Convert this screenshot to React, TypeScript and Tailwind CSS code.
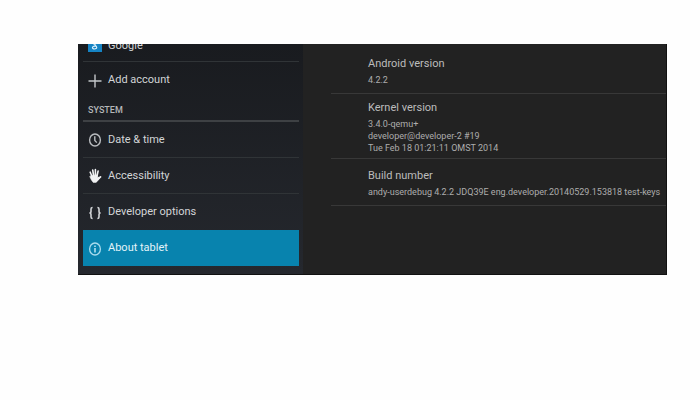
import React from 'react';

interface MenuItemProps {
  label: string;
  icon: React.ReactNode;
  active?: boolean;
  last?: boolean;
}

interface InfoRowProps {
  title: string;
  lines: string[];
  compact?: boolean;
}

const PlusIcon = () => (
  <svg viewBox="0 0 14 14" className="w-3.5 h-3.5" fill="none" stroke="#c4c7ca" strokeWidth="1.4">
    <path d="M7 0.5v13M0.5 7h13" />
  </svg>
);

const ClockIcon = () => (
  <svg viewBox="0 0 14 14" className="w-3.5 h-3.5" fill="none" stroke="#b9bcbf" strokeWidth="1.4">
    <ellipse cx="7" cy="7" rx="5.4" ry="6" />
    <path d="M6.8 3.2v4.2l2 2.2" />
  </svg>
);

const HandIcon = () => (
  <svg viewBox="0 0 14 16" className="w-3.5 h-4" fill="none" stroke="#f1f2f3" strokeLinecap="round">
    <path d="M4 8.5L2.2 4.2M5.6 7.5L4.7 2M7.4 7.5V1.5M9 8l1.1-5" strokeWidth="1.6" />
    <path d="M9.6 11.5l2.9-2.6" strokeWidth="1.8" />
    <path
      d="M3.2 7.5L9.5 7l.3 2.6 1.4-.6.4 1.2-2.4 3.2-1.2 1H5.2L3.4 12 1.8 8.8z"
      fill="#f1f2f3"
      strokeWidth="0.5"
      strokeLinejoin="round"
    />
  </svg>
);

const BracesIcon = () => (
  <svg viewBox="0 0 14 14" className="w-3.5 h-3.5" fill="none" stroke="#d0d2d5" strokeWidth="1.6">
    <path d="M4.6 1.5C3.2 1.5 3 2 3 3v2.2C3 6.3 2.6 7 1.4 7 2.6 7 3 7.7 3 8.8V11c0 1 .2 1.5 1.6 1.5" />
    <path d="M9.4 1.5c1.4 0 1.6.5 1.6 1.5v2.2c0 1.1.4 1.8 1.6 1.8-1.2 0-1.6.7-1.6 1.8V11c0 1-.2 1.5-1.6 1.5" />
  </svg>
);

const InfoIcon = () => (
  <svg viewBox="0 0 14 14" className="w-3.5 h-3.5" fill="none" stroke="#a9dbed" strokeWidth="1.3">
    <ellipse cx="7" cy="7" rx="5.4" ry="6" />
    <path d="M7 6v4.4M7 3.4v1.5" strokeWidth="1.7" />
  </svg>
);

const GoogleIcon = () => (
  <svg viewBox="0 0 14 14" className="w-3.5 h-3.5">
    <rect width="14" height="14" fill="#1583c4" />
    <path
      d="M9.5 3H6.6C4.6 3 4.6 6.2 6.6 6.2S8.6 3 6.8 3M6.8 6.2c-.6 1 1.9 1.4 1.9 3.2 0 2.2-4.6 2-4.2 0 .2-1 1.6-1.4 3-1.3"
      fill="none"
      stroke="#d8effb"
      strokeWidth="1.2"
    />
  </svg>
);

const MenuItem: React.FC<MenuItemProps> = ({ label, icon, active, last }) => (
  <li>
    <button
      className={`flex items-center w-full h-9 pt-px pl-[5px] gap-1.5 text-left text-[11px] ${
        active ? 'bg-[#0883ae] text-[#e3f3f9]' : 'text-[#d3d5d7]'
      } ${active || last ? '' : 'border-b border-[#303437]'}`}
    >
      <span className="flex justify-center w-3.5">{icon}</span>
      {label}
    </button>
  </li>
);

const InfoRow: React.FC<InfoRowProps> = ({ title, lines, compact }) => (
  <div className={`pl-[37px] border-b border-[#383838] ${compact ? 'pt-[5px] pb-1' : 'pt-2 pb-[7px]'}`}>
    <dt className="mb-px text-[11px] leading-[18px] text-[#bcbcbc]">{title}</dt>
    {lines.map((line) => (
      <dd key={line} className="text-[9px] leading-3 text-[#adadad] whitespace-nowrap">
        {line}
      </dd>
    ))}
  </div>
);

const App: React.FC = () => {
  return (
    <div className="min-h-screen bg-[#fefefe] pt-11 pl-[78px] pr-[33px] font-['Roboto',sans-serif]">
      <div className="flex overflow-hidden bg-[#222222] border-b border-r border-[#111111]">
        <nav className="w-[225px] shrink-0 pl-[5px] pr-1 pb-2 bg-linear-to-b from-[#191b1f] to-[#25282e]">
          {/* Scrolled list: only the bottom of the first row shows */}
          <ul className="flex flex-col justify-end h-[18px] overflow-hidden">
            <li>
              <button className="flex items-start w-full h-6 pl-[5px] gap-1.5 text-left text-[11px] leading-4 text-[#d3d5d7] border-b border-[#303437]">
                <GoogleIcon />
                Google
              </button>
            </li>
          </ul>
          <ul>
            <MenuItem label="Add account" icon={<PlusIcon />} last />
          </ul>
          <h2 className="h-6 pl-[5px] text-[9px] leading-6 font-medium text-[#b4b6b8] border-b-2 border-[#3e4144]">
            SYSTEM
          </h2>
          <ul>
            <MenuItem label="Date & time" icon={<ClockIcon />} />
            <MenuItem label="Accessibility" icon={<HandIcon />} />
            <MenuItem label="Developer options" icon={<BracesIcon />} last />
            <MenuItem label="About tablet" icon={<InfoIcon />} active />
          </ul>
        </nav>

        <main className="flex-1 min-w-0 pl-7">
          <dl className="pt-[3px]">
            <InfoRow title="Android version" lines={['4.2.2']} />
            <InfoRow
              title="Kernel version"
              lines={['3.4.0-qemu+', 'developer@developer-2 #19', 'Tue Feb 18 01:21:11 OMST 2014']}
              compact
            />
            <InfoRow
              title="Build number"
              lines={['andy-userdebug 4.2.2 JDQ39E eng.developer.20140529.153818 test-keys']}
            />
          </dl>
        </main>
      </div>
    </div>
  );
};

export default App;
